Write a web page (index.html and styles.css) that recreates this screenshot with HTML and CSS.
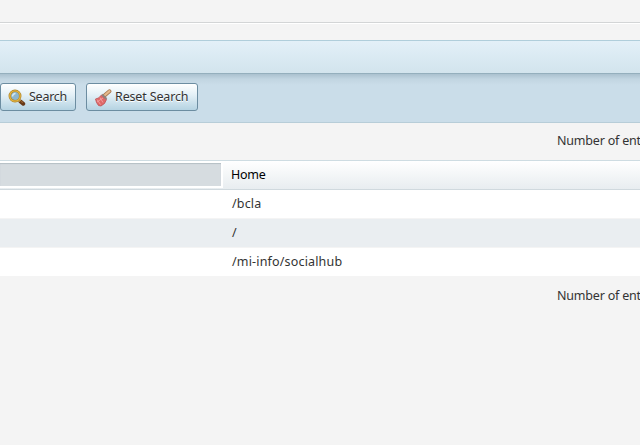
FILE: index.html
```html
<!DOCTYPE html>
<html lang="en">
<head>
<meta charset="utf-8">
<title>Search</title>
<link rel="stylesheet" href="styles.css">
</head>
<body>
<div class="top"></div>
<header class="titlebar"></header>
<div class="toolbar">
  <button class="btn search"><svg width="18" height="18" viewBox="0 0 18 18"><path d="M12.500 12.500l2.700 2.200" stroke="#673817" stroke-width="4" stroke-linecap="round"/><path d="M13 12.200l2 1.600" stroke="#95602f" stroke-width="1.300"/><path d="M10.500 10.500l1.800 1.700" stroke="#c69c45" stroke-width="2.500"/><circle cx="7" cy="7" r="5.200" fill="#8eb6cf" stroke="#a9802c" stroke-width="2.500"/><circle cx="7" cy="7" r="5.200" fill="none" stroke="#e4b540" stroke-width="1.300"/><path d="M4.500 7.500a3 3 0 0 1 3-3" fill="none" stroke="#d5e9f2" stroke-width="1.500"/></svg><span>Search</span></button>
  <button class="btn reset"><svg width="18" height="18" viewBox="0 0 18 18"><path d="M10.500 6.500L15.500 2.200" stroke="#a87850" stroke-width="3.800" stroke-linecap="round"/><path d="M10.500 6.500L15.500 2.200" stroke="#e5b98c" stroke-width="2.200" stroke-linecap="round"/><path d="M7.500 6l5 4.500-2 4-3.500 2.500-2.500-.5-2-3-1-3.500 3-1z" fill="#df6868" stroke="#bd5054" stroke-width=".8"/><path d="M3 10.500l3.500 5M6 8.500l3 5M3 13l6-4" stroke="#f3a1a0" stroke-width=".9"/><path d="M8 5.500l4.500 4.500" stroke="#8e817d" stroke-width="2"/></svg><span>Reset Search</span></button>
</div>
<div class="count first"><span>Number of ent</span></div>
<div class="table">
  <div class="head"><div class="sorted"></div><div class="cell">Home</div></div>
  <div class="row"><span class="path">/bcla</span></div>
  <div class="row alt"><span>/</span></div>
  <div class="row"><span class="path">/mi-info/socialhub</span></div>
</div>
<div class="count"><span>Number of ent</span></div>
</body>
</html>
```
FILE: styles.css
```css
* { box-sizing: border-box; }
body { margin: 0; height: 445px; overflow: hidden; background: #f4f4f4; color: #333; font: 12.5px/18px "Noto Sans", sans-serif; }
.top { height: 24px; margin-bottom: 16px; border-bottom: 1px solid #fff; box-shadow: inset 0 -1px #d3d5d6; }
.titlebar { height: 33px; border-top: 1px solid #b0cedb; background: linear-gradient(#e3f0f8, #d2e4ed); }
.toolbar { height: 50px; display: flex; gap: 10px; padding-top: 9px; border-top: 1px solid #94afbd; border-bottom: 1px solid #b7cdd8; background: linear-gradient(#aac1cf, #c1d5e1 5px, #cadde9 11px); }
.btn { height: 28px; display: flex; align-items: center; gap: 3px; padding: 0 0 1px 7px; border: 1px solid #6c8da1; border-radius: 3px; background: linear-gradient(#fff, #e5f1f7 40%, #b5d3e2); color: #333; font: inherit; text-shadow: 0 1px #fff; white-space: nowrap; }
.btn svg { flex: none; fill: none; position: relative; top: 1px; }
.search { width: 76px; }
.search span { letter-spacing: -.25px; }
.reset { width: 112px; }
.reset span { letter-spacing: -.15px; }
.count { height: 38px; padding: 10px 0 0 557px; white-space: nowrap; letter-spacing: -.2px; }
.count.first { height: 37px; padding-top: 9px; }
.head { height: 30px; display: flex; border-top: 1px solid #cedce2; border-bottom: 1px solid #d0d9de; background: linear-gradient(#fff, #e8edf0); color: #000; }
.sorted { width: 223px; height: 27px; border: solid #fff; border-width: 2px 2px 2px 0; background: #d6dce0; box-shadow: inset 0 1px 1px #b5bfc5; }
.cell { padding: 5px 0 0 8px; letter-spacing: -.25px; }
.row { height: 29px; padding: 5px 0 0 232px; background: #fff; border-bottom: 1px solid #f4f4f4; }
.path { letter-spacing: .17px; }
.alt { background: #eaeef1; }
```
